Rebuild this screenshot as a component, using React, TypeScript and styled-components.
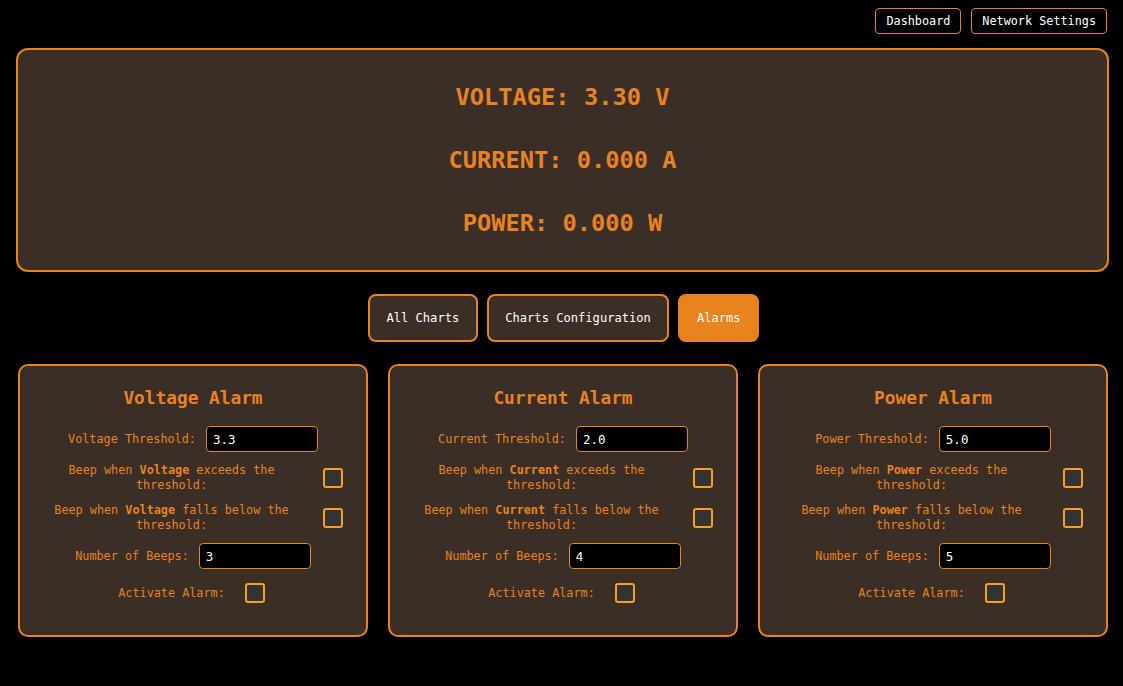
import React from "react";
import styled, { createGlobalStyle } from "styled-components";

const ORANGE = "#e8831f";
const PANEL = "#3a2e27";
const MONO = `"DejaVu Sans Mono", "Liberation Mono", monospace`;

const GlobalStyle = createGlobalStyle`
  html, body {
    margin: 0;
    padding: 0;
    background: #000;
    font-family: ${MONO};
  }
  * { box-sizing: border-box; }
`;

const Page = styled.div`
  min-height: 686px;
  background: #000;
  display: flex;
  flex-direction: column;
  padding: 8px 14px 0 16px;
`;

const TopNav = styled.nav`
  display: flex;
  justify-content: flex-end;
  gap: 10px;
  padding-right: 2px;
`;

const NavButton = styled.button`
  height: 26px;
  padding: 0 10px;
  background: #000;
  color: #fff;
  border: 1px solid ${ORANGE};
  border-radius: 4px;
  font-family: ${MONO};
  font-size: 11.8px;
  line-height: 24px;
  cursor: pointer;
`;

const Readout = styled.section`
  margin-top: 14px;
  height: 224px;
  background: ${PANEL};
  border: 2px solid ${ORANGE};
  border-radius: 12px;
  display: flex;
  flex-direction: column;
  align-items: center;
  gap: 33px;
  padding-top: 32px;
`;

const Reading = styled.div`
  color: ${ORANGE};
  font-weight: bold;
  font-size: 23.7px;
  line-height: 30px;
`;

const Tabs = styled.div`
  display: flex;
  justify-content: center;
  gap: 9px;
  margin-top: 22px;
  padding-left: 2px;
`;

const Tab = styled.button<{ $active?: boolean }>`
  height: 48px;
  padding: 0 16.5px;
  background: ${(p) => (p.$active ? ORANGE : PANEL)};
  color: #fff;
  border: 2px solid ${ORANGE};
  border-radius: 8px;
  font-family: ${MONO};
  font-size: 12.1px;
  font-weight: 500;
  cursor: pointer;
`;

const Cards = styled.div`
  display: grid;
  grid-template-columns: repeat(3, 350px);
  gap: 20px;
  margin-top: 22px;
  margin-left: 2px;
`;

const Card = styled.div`
  height: 273px;
  background: ${PANEL};
  border: 2px solid ${ORANGE};
  border-radius: 10px;
  padding: 21px 20px 0;
  display: flex;
  flex-direction: column;
  align-items: center;
  gap: 10px;
`;

const CardTitle = styled.h3`
  margin: 0 0 7px;
  color: ${ORANGE};
  font-size: 17.8px;
  line-height: 22px;
  font-weight: bold;
`;

const Row = styled.div<{ $h?: number; $mt?: number }>`
  width: 100%;
  display: flex;
  justify-content: center;
  align-items: center;
  min-height: ${(p) => p.$h ?? 26}px;
  margin-top: ${(p) => p.$mt ?? 0}px;
`;

const FieldLabel = styled.label<{ $gap?: number }>`
  color: ${ORANGE};
  font-size: 11.8px;
  line-height: 15px;
  text-align: center;
  margin-right: ${(p) => p.$gap ?? 10}px;
  b { font-weight: bold; }
`;

const WrapLabel = styled(FieldLabel)`
  flex: 1 1 auto;
`;

const TextInput = styled.input`
  width: 112px;
  height: 26px;
  background: #000;
  color: #fff;
  border: 1px solid ${ORANGE};
  border-radius: 4px;
  padding: 0 6px;
  font-family: ${MONO};
  font-size: 12.5px;
  outline: none;
`;

const Check = styled.input`
  appearance: none;
  width: 20px;
  height: 20px;
  margin: 3px 3px 3px 4px;
  flex: 0 0 auto;
  background: #333;
  border: 2px solid #f5a01e;
  border-radius: 3px;
  cursor: pointer;
`;

type AlarmProps = { name: string; threshold: string; beeps: string };

const AlarmCard = ({ name, threshold, beeps }: AlarmProps) => (
  <Card>
    <CardTitle>{name} Alarm</CardTitle>
    <Row>
      <FieldLabel>{name} Threshold:</FieldLabel>
      <TextInput defaultValue={threshold} />
    </Row>
    <Row $h={30} $mt={1}>
      <WrapLabel $gap={16}>
        Beep when <b>{name}</b> exceeds the threshold:
      </WrapLabel>
      <Check type="checkbox" />
    </Row>
    <Row $h={30}>
      <WrapLabel $gap={16}>
        Beep when <b>{name}</b> falls below the threshold:
      </WrapLabel>
      <Check type="checkbox" />
    </Row>
    <Row>
      <FieldLabel>Number of Beeps:</FieldLabel>
      <TextInput defaultValue={beeps} />
    </Row>
    <Row $mt={1}>
      <FieldLabel $gap={16}>Activate Alarm:</FieldLabel>
      <Check type="checkbox" />
    </Row>
  </Card>
);

export default function App() {
  return (
    <>
      <GlobalStyle />
      <Page>
        <TopNav>
          <NavButton>Dashboard</NavButton>
          <NavButton>Network Settings</NavButton>
        </TopNav>
        <Readout>
          <Reading>VOLTAGE: 3.30 V</Reading>
          <Reading>CURRENT: 0.000 A</Reading>
          <Reading>POWER: 0.000 W</Reading>
        </Readout>
        <Tabs>
          <Tab>All Charts</Tab>
          <Tab>Charts Configuration</Tab>
          <Tab $active>Alarms</Tab>
        </Tabs>
        <Cards>
          <AlarmCard name="Voltage" threshold="3.3" beeps="3" />
          <AlarmCard name="Current" threshold="2.0" beeps="4" />
          <AlarmCard name="Power" threshold="5.0" beeps="5" />
        </Cards>
      </Page>
    </>
  );
}
